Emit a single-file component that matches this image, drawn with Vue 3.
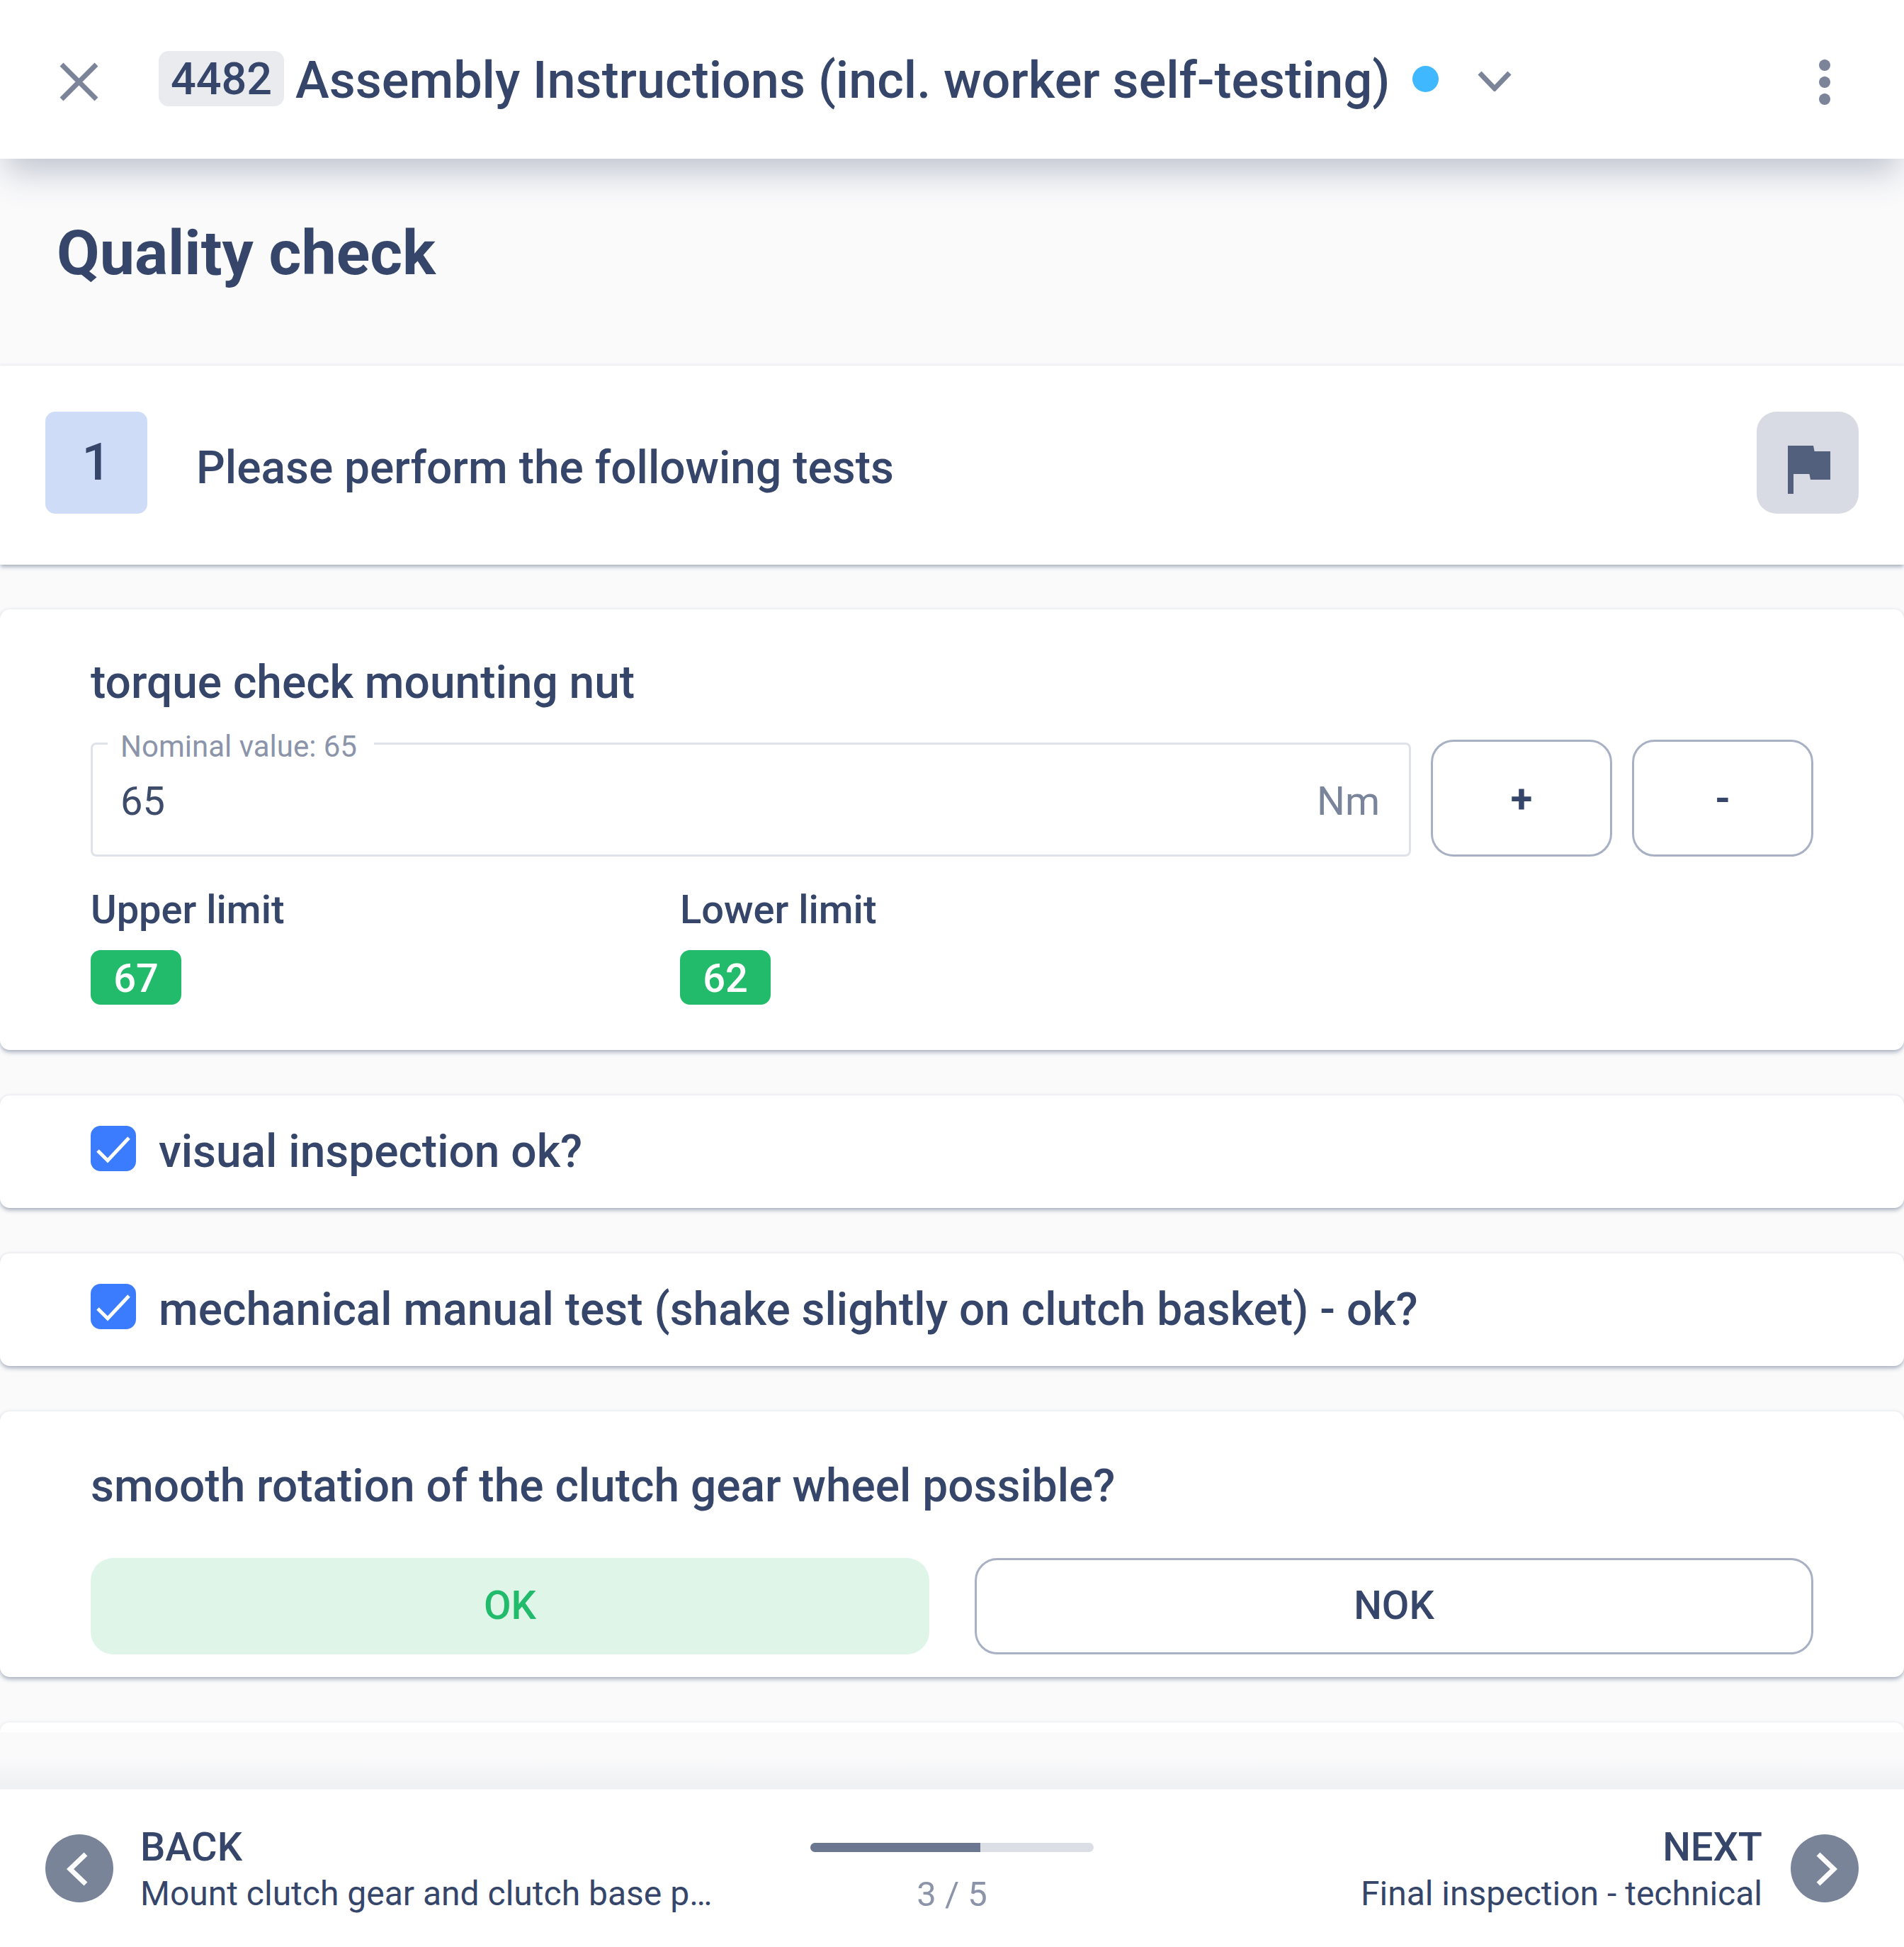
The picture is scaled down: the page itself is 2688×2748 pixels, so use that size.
<script setup>
const limits = [
  { label: 'Upper limit', value: 67 },
  { label: 'Lower limit', value: 62 }
]
const checks = [
  'visual inspection ok?',
  'mechanical manual test (shake slightly on clutch basket) - ok?'
]
</script>

<template>
  <div class="page">
    <header class="topbar">
      <svg class="close-icon" viewBox="0 0 55 55">
        <path d="M3 3 L52 52 M52 3 L3 52" />
      </svg>
      <span class="doc-id">4482</span>
      <h1 class="doc-title">Assembly Instructions (incl. worker self-testing)</h1>
      <span class="status-dot"></span>
      <svg class="caret" viewBox="0 0 48 30">
        <path d="M3 4 L24 26 L45 4" />
      </svg>
      <div class="more">
        <span></span><span></span><span></span>
      </div>
    </header>

    <main class="content">
      <h2 class="section-title">Quality check</h2>

      <section class="step">
        <div class="step-no">1</div>
        <div class="step-text">Please perform the following tests</div>
        <button class="flag-btn">
          <svg viewBox="0 -2 24 24"><path d="M14.4 6L14 4H5v17h2v-7h5.6l.4 2h7V6z" /></svg>
        </button>
      </section>

      <section class="card torque">
        <h3 class="card-title">torque check mounting nut</h3>
        <div class="field-row">
          <fieldset class="field">
            <legend>Nominal value: 65</legend>
            <span class="field-value">65</span>
            <span class="field-unit">Nm</span>
          </fieldset>
          <button class="step-btn">+</button>
          <button class="step-btn">-</button>
        </div>
        <div class="limits">
          <div v-for="l in limits" :key="l.label" class="limit">
            <div class="limit-label">{{ l.label }}</div>
            <span class="limit-value">{{ l.value }}</span>
          </div>
        </div>
      </section>

      <section v-for="c in checks" :key="c" class="card check-card">
        <span class="checkbox">
          <svg viewBox="0 0 64 64"><path d="M10 35 L24 49 L54 17" /></svg>
        </span>
        <span class="check-label">{{ c }}</span>
      </section>

      <section class="card rotation">
        <h3 class="card-title">smooth rotation of the clutch gear wheel possible?</h3>
        <div class="answer-row">
          <button class="answer ok">OK</button>
          <button class="answer nok">NOK</button>
        </div>
      </section>

      <section class="card next-peek"></section>
      <div class="fade"></div>
    </main>

    <footer class="bottombar">
      <div class="nav back">
        <span class="nav-circle">
          <svg viewBox="0 0 96 96"><path d="M57 28 L35 49 L57 70" /></svg>
        </span>
        <div class="nav-text">
          <div class="nav-label">BACK</div>
          <div class="nav-sub">Mount clutch gear and clutch base p…</div>
        </div>
      </div>
      <div class="progress">
        <div class="progress-track"><div class="progress-fill" :style="{ width: '60%' }"></div></div>
        <div class="progress-text">3 / 5</div>
      </div>
      <div class="nav next">
        <div class="nav-text">
          <div class="nav-label">NEXT</div>
          <div class="nav-sub">Final inspection - technical</div>
        </div>
        <span class="nav-circle">
          <svg viewBox="0 0 96 96"><path d="M39 28 L61 49 L39 70" /></svg>
        </span>
      </div>
    </footer>
  </div>
</template>

<style scoped>
.page {
  width: 2688px;
  height: 2748px;
  display: flex;
  flex-direction: column;
  overflow: hidden;
  background: #fafafb;
  color: #35466a;
  font-family: Roboto, "Liberation Sans", sans-serif;
}

.topbar {
  height: 224px;
  flex: none;
  display: flex;
  align-items: center;
  padding-left: 84px;
  background: #fff;
  position: relative;
  z-index: 2;
  box-shadow: 0 26px 44px -8px rgba(53, 70, 106, 0.3);
}

.close-icon {
  width: 55px;
  height: 55px;
  margin-right: 85px;
  margin-top: 6px;
}

.close-icon path {
  fill: none;
  stroke: #7b8499;
  stroke-width: 7;
}

.doc-id {
  width: 177px;
  height: 78px;
  margin-top: -2px;
  display: flex;
  align-items: center;
  justify-content: center;
  background: #e9ebef;
  border-radius: 14px;
  font-size: 63px;
  font-weight: 500;
}

.doc-title {
  margin: 4px 0 0 16px;
  font-size: 72px;
  font-weight: 500;
  line-height: 78px;
  white-space: nowrap;
}

.status-dot {
  width: 37px;
  height: 37px;
  margin-left: 32px;
  margin-top: -2px;
  border-radius: 50%;
  background: #3fb8ff;
}

.caret {
  width: 48px;
  height: 30px;
  margin-left: 55px;
  margin-top: 4px;
}

.caret path {
  fill: none;
  stroke: #7b8499;
  stroke-width: 7;
}

.more {
  margin-left: auto;
  margin-right: 104px;
  display: flex;
  flex-direction: column;
  gap: 8px;
  margin-top: 8px;
}

.more span {
  width: 16px;
  height: 16px;
  border-radius: 50%;
  background: #7b8499;
}

.content {
  flex: 1;
  min-height: 0;
  overflow: hidden;
}

.section-title {
  height: 292px;
  margin: 0;
  padding: 84px 0 0 80px;
  box-sizing: border-box;
  font-size: 88px;
  font-weight: 700;
  line-height: 98px;
}

.step {
  height: 281px;
  box-sizing: border-box;
  padding: 0 64px 8px;
  display: flex;
  align-items: center;
  background: #fff;
  box-shadow: 0 4px 6px -1px rgba(53, 70, 106, 0.4), 0 0 5px rgba(53, 70, 106, 0.12);
}

.step-no {
  width: 144px;
  height: 144px;
  display: flex;
  align-items: center;
  justify-content: center;
  box-sizing: border-box;
  background: #cfdcf8;
  border-radius: 14px;
  font-size: 72px;
  font-weight: 500;
}

.step-text {
  margin-left: 69px;
  margin-top: 16px;
  font-size: 64px;
  font-weight: 500;
}

.flag-btn {
  width: 144px;
  height: 144px;
  margin-left: auto;
  padding: 0;
  border: none;
  border-radius: 28px;
  background: #d8dbe3;
  display: flex;
  align-items: center;
  justify-content: center;
}

.flag-btn svg {
  width: 96px;
  height: 96px;
  fill: #525f7d;
}

.card {
  margin-top: 63px;
  background: #fff;
  border-radius: 14px;
  box-shadow: 0 4px 6px -1px rgba(53, 70, 106, 0.4), 0 0 5px rgba(53, 70, 106, 0.12);
}

.torque {
  height: 622px;
  box-sizing: border-box;
  padding: 67px 128px 0;
}

.card-title {
  margin: 0;
  font-size: 64px;
  font-weight: 500;
  line-height: 74px;
}

.field-row {
  display: flex;
  gap: 28px;
  margin-top: 43px;
  height: 165px;
}

.field {
  flex: 1;
  position: relative;
  margin: 0;
  padding: 0 41px 10px 39px;
  min-width: 0;
  height: 177px;
  margin-top: -12px;
  box-sizing: border-box;
  border: 3px solid #dfe2e9;
  border-radius: 8px;
  display: flex;
  align-items: center;
  justify-content: space-between;
}

.field legend {
  padding: 10px 24px 0 18px;
  margin-left: -18px;
  font-size: 42px;
  line-height: 24px;
  color: #8b94a8;
}

.field-value,
.field-unit {
  font-size: 56px;
}

.field-value {
  color: #3d4c6b;
}

.field-unit {
  color: #7a859c;
}

.step-btn {
  width: 256px;
  flex: none;
  padding: 0;
  background: #fff;
  border: 3px solid #a8b1c4;
  border-radius: 32px;
  color: #35466a;
  font-family: inherit;
  font-size: 56px;
  font-weight: 700;
}

.limits {
  display: grid;
  grid-template-columns: 832px 832px;
  margin-top: 42px;
}

.limit-label {
  font-size: 56px;
  font-weight: 500;
  line-height: 66px;
}

.limit-value {
  display: inline-block;
  width: 128px;
  height: 77px;
  margin-top: 24px;
  background: #22bb6c;
  border-radius: 14px;
  color: #fff;
  font-size: 56px;
  font-weight: 500;
  line-height: 80px;
  text-align: center;
}

.check-card {
  height: 159px;
  margin-top: 64px;
  padding: 0 128px;
  display: flex;
  align-items: center;
}

.checkbox {
  width: 64px;
  height: 64px;
  margin-top: -10px;
  border-radius: 14px;
  background: #3b7cff;
  flex: none;
}

.checkbox svg {
  display: block;
  width: 64px;
  height: 64px;
  fill: none;
  stroke: #fff;
  stroke-width: 5;
}

.check-label {
  margin-left: 32px;
  font-size: 64px;
  font-weight: 500;
}

.rotation {
  height: 375px;
  margin-top: 64px;
  box-sizing: border-box;
  padding: 69px 128px 0;
}

.answer-row {
  display: grid;
  grid-template-columns: 1fr 1fr;
  gap: 64px;
  margin-top: 64px;
}

.answer {
  height: 136px;
  padding: 0 0 2px;
  box-sizing: border-box;
  border-radius: 32px;
  font-family: inherit;
  font-size: 56px;
  font-weight: 500;
}

.ok {
  border: none;
  background: #def5e8;
  color: #22bb6c;
}

.nok {
  border: 3px solid #a8b1c4;
  background: #fff;
  color: #35466a;
}

.next-peek {
  height: 14px;
  margin-top: 64px;
  border-radius: 14px 14px 0 0;
  box-shadow: 0 0 5px rgba(53, 70, 106, 0.12);
}

.fade {
  height: 80px;
  background: linear-gradient(#fafafb 45%, #eff0f3);
  position: relative;
}

.bottombar {
  height: 222px;
  flex: none;
  box-sizing: border-box;
  padding: 0 64px;
  display: grid;
  grid-template-columns: 1fr 400px 1fr;
  align-items: center;
  background: #fff;
  position: relative;
}

.nav {
  display: flex;
  align-items: center;
}

.next {
  justify-content: flex-end;
}

.nav-circle {
  width: 96px;
  height: 96px;
  flex: none;
  border-radius: 50%;
  background: #7a8499;
}

.nav-circle svg {
  display: block;
  width: 96px;
  height: 96px;
  fill: none;
  stroke: #fff;
  stroke-width: 7;
}

.nav-text {
  margin-top: 6px;
}

.back .nav-text {
  margin-left: 38px;
}

.next .nav-text {
  margin-right: 40px;
  text-align: right;
}

.nav-label {
  font-size: 56px;
  font-weight: 500;
  line-height: 66px;
}

.nav-sub {
  font-size: 48px;
  line-height: 66px;
  white-space: nowrap;
}

.progress {
  text-align: center;
  padding-top: 29px;
}

.progress-track {
  height: 13px;
  margin-bottom: 31px;
  border-radius: 7px;
  background: #dcdee5;
  overflow: hidden;
}

.progress-fill {
  height: 100%;
  background: #6b7690;
}

.progress-text {
  font-size: 49px;
  line-height: 58px;
  color: #8b94a8;
}
</style>

<style>
body {
  background: #fafafb;
}
</style>
